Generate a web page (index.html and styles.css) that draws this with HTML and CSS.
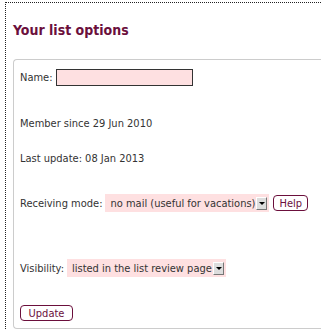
FILE: index.html
```html
<!DOCTYPE html>
<html lang="en">
<head>
  <meta charset="UTF-8" />
  <title>Your list options</title>
  <link rel="stylesheet" href="styles.css">
</head>
<body>
<div class="panel">
  <h2 class="title">Your list options</h2>
  <div class="box">
    <div class="row row-name">
      <label for="name">Name:</label>
      <input type="text" id="name" class="field">
    </div>
    <div class="row row-member">Member since 29 Jun 2010</div>
    <div class="row row-update">Last update: 08 Jan 2013</div>
    <div class="row row-mode">
      <span class="label">Receiving mode:</span>
      <span class="select">no mail (useful for vacations)<span class="arrow"></span></span>
      <button class="btn btn-help">Help</button>
    </div>
    <div class="row row-vis">
      <span class="label">Visibility:</span>
      <span class="select">listed in the list review page<span class="arrow"></span></span>
    </div>
    <div class="row row-submit">
      <button class="btn btn-update">Update</button>
    </div>
  </div>
</div>
</body>
</html>
```

FILE: styles.css
```css
html, body {
  margin: 0;
  padding: 0;
  background: #fff;
  overflow: hidden;
}
body {
  font-family: "DejaVu Sans Condensed", "DejaVu Sans", sans-serif;
  font-size: 11px;
  color: #333;
}
.panel {
  margin: 2px 0 0 5px;
  padding: 0 0 0 7px;
  border-top: 1px dotted #222;
  border-left: 1px dotted #222;
}
.title {
  margin: 0;
  padding: 19px 0 0 0;
  height: 37px;
  font-size: 14px;
  font-weight: bold;
  color: #6b0f3c;
}
.box {
  display: flex;
  flex-direction: column;
  padding: 8px 0 6px 6px;
  border: 1px solid #ccc;
  border-right: none;
  border-radius: 4px 0 0 4px;
}
.row {
  display: flex;
  align-items: center;
  height: 18px;
}
.row-member { margin-top: 28px; }
.row-update { margin-top: 17px; }
.row-mode { margin-top: 27px; }
.row-vis { margin-top: 47px; }
.row-submit { margin-top: 27px; }
label, .label {
  margin-right: 3px;
}
.field {
  width: 135px;
  height: 15px;
  padding: 0;
  margin: 0;
  border: 1px solid #333;
  background: #fee0e1;
}
.select {
  display: flex;
  align-items: center;
  height: 18px;
  padding: 0 2px 0 5px;
  background: #fee0e1;
  color: #333;
}
.arrow {
  position: relative;
  width: 9px;
  height: 11px;
  margin-left: 1px;
  background: #ddd;
  border-top: 1px solid #fff;
  border-left: 1px solid #fff;
  border-right: 1px solid #777;
  border-bottom: 1px solid #777;
}
.arrow::after {
  content: "";
  position: absolute;
  left: 2px;
  top: 4px;
  border-left: 3px solid transparent;
  border-right: 3px solid transparent;
  border-top: 3px solid #000;
}
.btn {
  height: 16px;
  padding: 0 5px;
  font-family: inherit;
  font-size: 11px;
  color: #6b0f3c;
  background: #fff;
  border: 1px solid #6b0f3c;
  border-radius: 4px;
}
.btn-help {
  margin-left: 4px;
}
.btn-update {
  width: 53px;
}
```
